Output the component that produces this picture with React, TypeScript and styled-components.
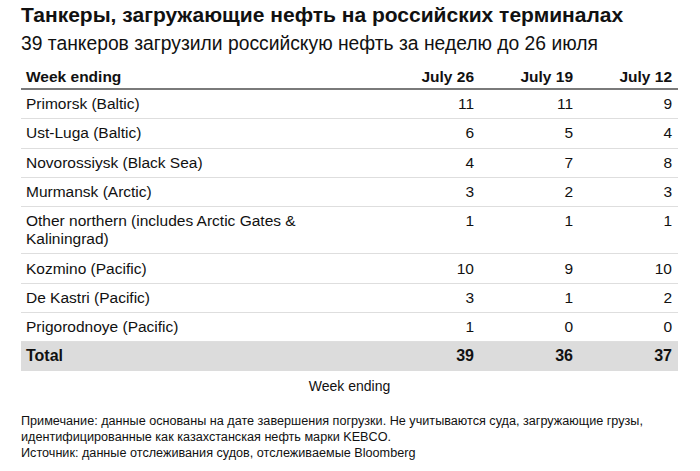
import React from "react";
import styled, { createGlobalStyle } from "styled-components";

const GlobalStyle = createGlobalStyle`
  html, body {
    margin: 0;
    padding: 0;
    background: #ffffff;
  }
  body {
    font-family: "Liberation Sans", Arial, sans-serif;
    color: #111111;
  }
`;

type Row = {
  terminal: string;
  values: number[];
};

const rows: Row[] = [
  { terminal: "Primorsk (Baltic)", values: [11, 11, 9] },
  { terminal: "Ust-Luga (Baltic)", values: [6, 5, 4] },
  { terminal: "Novorossiysk (Black Sea)", values: [4, 7, 8] },
  { terminal: "Murmansk (Arctic)", values: [3, 2, 3] },
  { terminal: "Other northern (includes Arctic Gates & Kaliningrad)", values: [1, 1, 1] },
  { terminal: "Kozmino (Pacific)", values: [10, 9, 10] },
  { terminal: "De Kastri (Pacific)", values: [3, 1, 2] },
  { terminal: "Prigorodnoye (Pacific)", values: [1, 0, 0] },
];

const weeks = ["July 26", "July 19", "July 12"];
const totals = [39, 36, 37];

const Chart = () => {
  return (
    <ChartStyled>
      <h1 className={"title"}>Танкеры, загружающие нефть на российских терминалах</h1>
      <h2 className={"subtitle"}>39 танкеров загрузили российскую нефть за неделю до 26 июля</h2>
      <Table>
        <colgroup>
          <col style={{ width: 360 }} />
          <col style={{ width: 99 }} />
          <col style={{ width: 99 }} />
          <col style={{ width: 99 }} />
        </colgroup>
        <thead>
          <tr>
            <HeadCell>Week ending</HeadCell>
            {weeks.map((w) => (
              <HeadCell key={w} $numeric>{w}</HeadCell>
            ))}
          </tr>
        </thead>
        <tbody>
          {rows.map((r) => (
            <tr key={r.terminal}>
              <Cell>{r.terminal}</Cell>
              {r.values.map((v, i) => (
                <Cell key={i} $numeric>{v}</Cell>
              ))}
            </tr>
          ))}
          <TotalRow>
            <Cell $total>Total</Cell>
            {totals.map((t, i) => (
              <Cell key={i} $numeric $total>{t}</Cell>
            ))}
          </TotalRow>
        </tbody>
      </Table>
      <div className={"caption"}>Week ending</div>
      <footer className={"notes"}>
        <p>Примечание: данные основаны на дате завершения погрузки. Не учитываются суда, загружающие грузы, идентифицированные как казахстанская нефть марки KEBCO.</p>
        <p>Источник: данные отслеживания судов, отслеживаемые Bloomberg</p>
      </footer>
    </ChartStyled>
  );
};

const ChartStyled = styled.div`
  width: 657px;
  padding: 3px 0 0 21px;

  .title {
    margin: 0;
    font-size: 21px;
    line-height: 24px;
    font-weight: 700;
    color: #111111;
    white-space: nowrap;
  }

  .subtitle {
    margin: 6px 0 0;
    font-size: 19.3px;
    line-height: 22px;
    font-weight: 400;
    color: #111111;
    white-space: nowrap;
  }

  .caption {
    margin-top: 7px;
    text-align: center;
    font-size: 14px;
    line-height: 16px;
    color: #111111;
  }

  .notes {
    margin-top: 19px;
    width: 640px;
    font-size: 12.65px;
    line-height: 16px;
    color: #111111;

    p {
      margin: 0;
    }
  }
`;

const Table = styled.table`
  margin-top: 13px;
  width: 657px;
  table-layout: fixed;
  border-collapse: collapse;
  font-size: 15.5px;
  line-height: 18px;
`;

const HeadCell = styled.th<{ $numeric?: boolean }>`
  padding: 0 6px 2px 5px;
  text-align: ${(p) => (p.$numeric ? "right" : "left")};
  font-weight: 700;
  border-bottom: 2px solid #7a7a7a;
`;

const Cell = styled.td<{ $numeric?: boolean; $total?: boolean }>`
  padding: 5.15px 6px 5.15px 5px;
  text-align: ${(p) => (p.$numeric ? "right" : "left")};
  vertical-align: top;
  font-weight: ${(p) => (p.$total ? 700 : 400)};
  font-size: ${(p) => (p.$total ? "16px" : "15.5px")};
  border-bottom: ${(p) => (p.$total ? "none" : "1px solid #dedede")};
`;

const TotalRow = styled.tr`
  background: #dcdcdc;
`;

export default function App() {
  return (
    <>
      <GlobalStyle />
      <Chart />
    </>
  );
}
